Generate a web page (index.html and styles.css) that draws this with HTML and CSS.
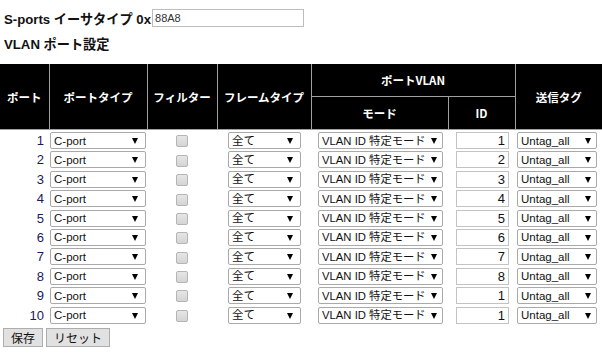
FILE: index.html
```html
<!DOCTYPE html>
<html lang="ja">
<head>
  <meta charset="UTF-8">
  <title>VLAN ポート設定</title>
  <link rel="stylesheet" href="styles.css">
</head>
<body>

<div class="ethertype">
  <span class="label">S-ports イーサタイプ 0x</span><input type="text" class="hex" value="88A8">
</div>

<h2>VLAN ポート設定</h2>

<table class="vlan">
  <colgroup>
    <col class="c-port"><col class="c-type"><col class="c-filter"><col class="c-frame">
    <col class="c-mode"><col class="c-id"><col class="c-tag">
  </colgroup>
  <thead>
    <tr>
      <th rowspan="2">ポート</th>
      <th rowspan="2">ポートタイプ</th>
      <th rowspan="2">フィルター</th>
      <th rowspan="2">フレームタイプ</th>
      <th colspan="2">ポートVLAN</th>
      <th rowspan="2">送信タグ</th>
    </tr>
    <tr>
      <th>モード</th>
      <th>ID</th>
    </tr>
  </thead>
  <tbody id="rows"></tbody>
</table>

<div class="actions">
  <button type="button">保存</button>
  <button type="button">リセット</button>
</div>

<script>
  // port -> pvid
  const pvids = [1, 2, 3, 4, 5, 6, 7, 8, 1, 1];
  const tbody = document.getElementById('rows');

  pvids.forEach((pvid, i) => {
    const tr = document.createElement('tr');
    tr.innerHTML =
      '<td class="num">' + (i + 1) + '</td>' +
      '<td><span class="sel w-type"><select><option>C-port</option><option>S-port</option></select></span></td>' +
      '<td><input type="checkbox" class="chk" disabled></td>' +
      '<td><span class="sel w-frame"><select><option>全て</option></select></span></td>' +
      '<td><span class="sel w-mode"><select><option>VLAN ID 特定モード</option></select></span></td>' +
      '<td><input type="text" class="pvid" value="' + pvid + '"></td>' +
      '<td><span class="sel w-tag"><select><option>Untag_all</option></select></span></td>';
    tbody.appendChild(tr);
  });
</script>

</body>
</html>
```

FILE: styles.css
```css
/* Global Styles */
body {
  margin: 0;
  font-family: "Liberation Sans", "Noto Sans CJK JP", sans-serif;
  font-size: 12px;
  color: #111;
  background: #fff;
}

.ethertype {
  display: flex;
  align-items: center;
  padding: 9px 0 0 4px;
  height: 18px;
}

.ethertype .label {
  font-size: 13.2px;
  font-weight: bold;
}

.hex {
  width: 152px;
  height: 18px;
  box-sizing: border-box;
  margin: 0 0 0 1px;
  padding: 0 2px;
  border: 1px solid #bdbdbd;
  font-family: "Liberation Sans", sans-serif;
  font-size: 11px;
  color: #333;
}

h2 {
  margin: 9px 0 0 4px;
  font-size: 13.2px;
  height: 28px;
  line-height: 18px;
}

/* Table */
.vlan {
  width: 602px;
  border-collapse: collapse;
  table-layout: fixed;
}

.c-port { width: 49px; }
.c-type { width: 98px; }
.c-filter { width: 70px; }
.c-frame { width: 94px; }
.c-mode { width: 137px; }
.c-id { width: 67px; }
.c-tag { width: 87px; }

.vlan th {
  background: #000;
  color: #fff;
  font-family: "Noto Sans CJK JP", sans-serif;
  font-size: 11.5px;
  font-weight: bold;
  border: 1px solid #a0a0a0;
  border-top: none;
  padding: 0;
  height: 32px;
}

.vlan th:first-child { border-left: none; }
.vlan th:last-child { border-right: none; }

.vlan tbody tr:first-child td { padding-top: 2px; }

.vlan td {
  text-align: center;
  padding: 1px 0 1.4px;
  vertical-align: middle;
}

.vlan td.num {
  text-align: right;
  padding-right: 5px;
  font-size: 13px;
  color: #1a1a5c;
}

/* Selects */
.sel {
  position: relative;
  display: inline-block;
  vertical-align: middle;
}

.sel select {
  appearance: none;
  -webkit-appearance: none;
  width: 100%;
  height: 17px;
  box-sizing: border-box;
  margin: 0;
  padding: 0 0 0 3px;
  border: 1px solid #a9a9a9;
  border-radius: 2px;
  background: #fff;
  font-family: "Liberation Sans", "Noto Sans CJK JP", sans-serif;
  font-size: 11.5px;
  color: #111;
  display: block;
}

.sel::after {
  content: "";
  position: absolute;
  right: 8px;
  top: 6px;
  border-left: 3px solid transparent;
  border-right: 3px solid transparent;
  border-top: 6px solid #000;
  pointer-events: none;
}

.w-type { width: 96px; margin-left: 0; }
.w-frame { width: 73px; margin-left: 1px; }
.w-mode { width: 125px; margin-left: 2px; }
.w-tag { width: 80px; margin-left: -3px; }

.w-mode select { font-size: 11.3px; }
.w-mode::after { right: 6px; }
.w-tag::after { right: 6px; }

/* Checkbox */
.chk {
  appearance: none;
  -webkit-appearance: none;
  width: 12px;
  height: 12px;
  margin: 0;
  vertical-align: middle;
  border: 1px solid #b5b5b5;
  border-radius: 2px;
  background: linear-gradient(#e6e6e6, #d4d4d4);
}

.pvid {
  width: 53px;
  height: 17px;
  box-sizing: border-box;
  margin: 0 0 0 2px;
  padding: 0 3px;
  border: 1px solid #c3c3c3;
  text-align: right;
  font-family: "Liberation Sans", sans-serif;
  font-size: 13px;
  color: #111;
  vertical-align: middle;
}

/* Buttons */
.actions {
  display: flex;
  gap: 3px;
  padding: 3px 0 0 3px;
}

.actions button {
  height: 19px;
  padding: 0 7px;
  border: 1px solid #adadad;
  background: #e1e1e1;
  font-family: "Noto Sans CJK JP", sans-serif;
  font-size: 12px;
  line-height: 15px;
  color: #111;
}
```
